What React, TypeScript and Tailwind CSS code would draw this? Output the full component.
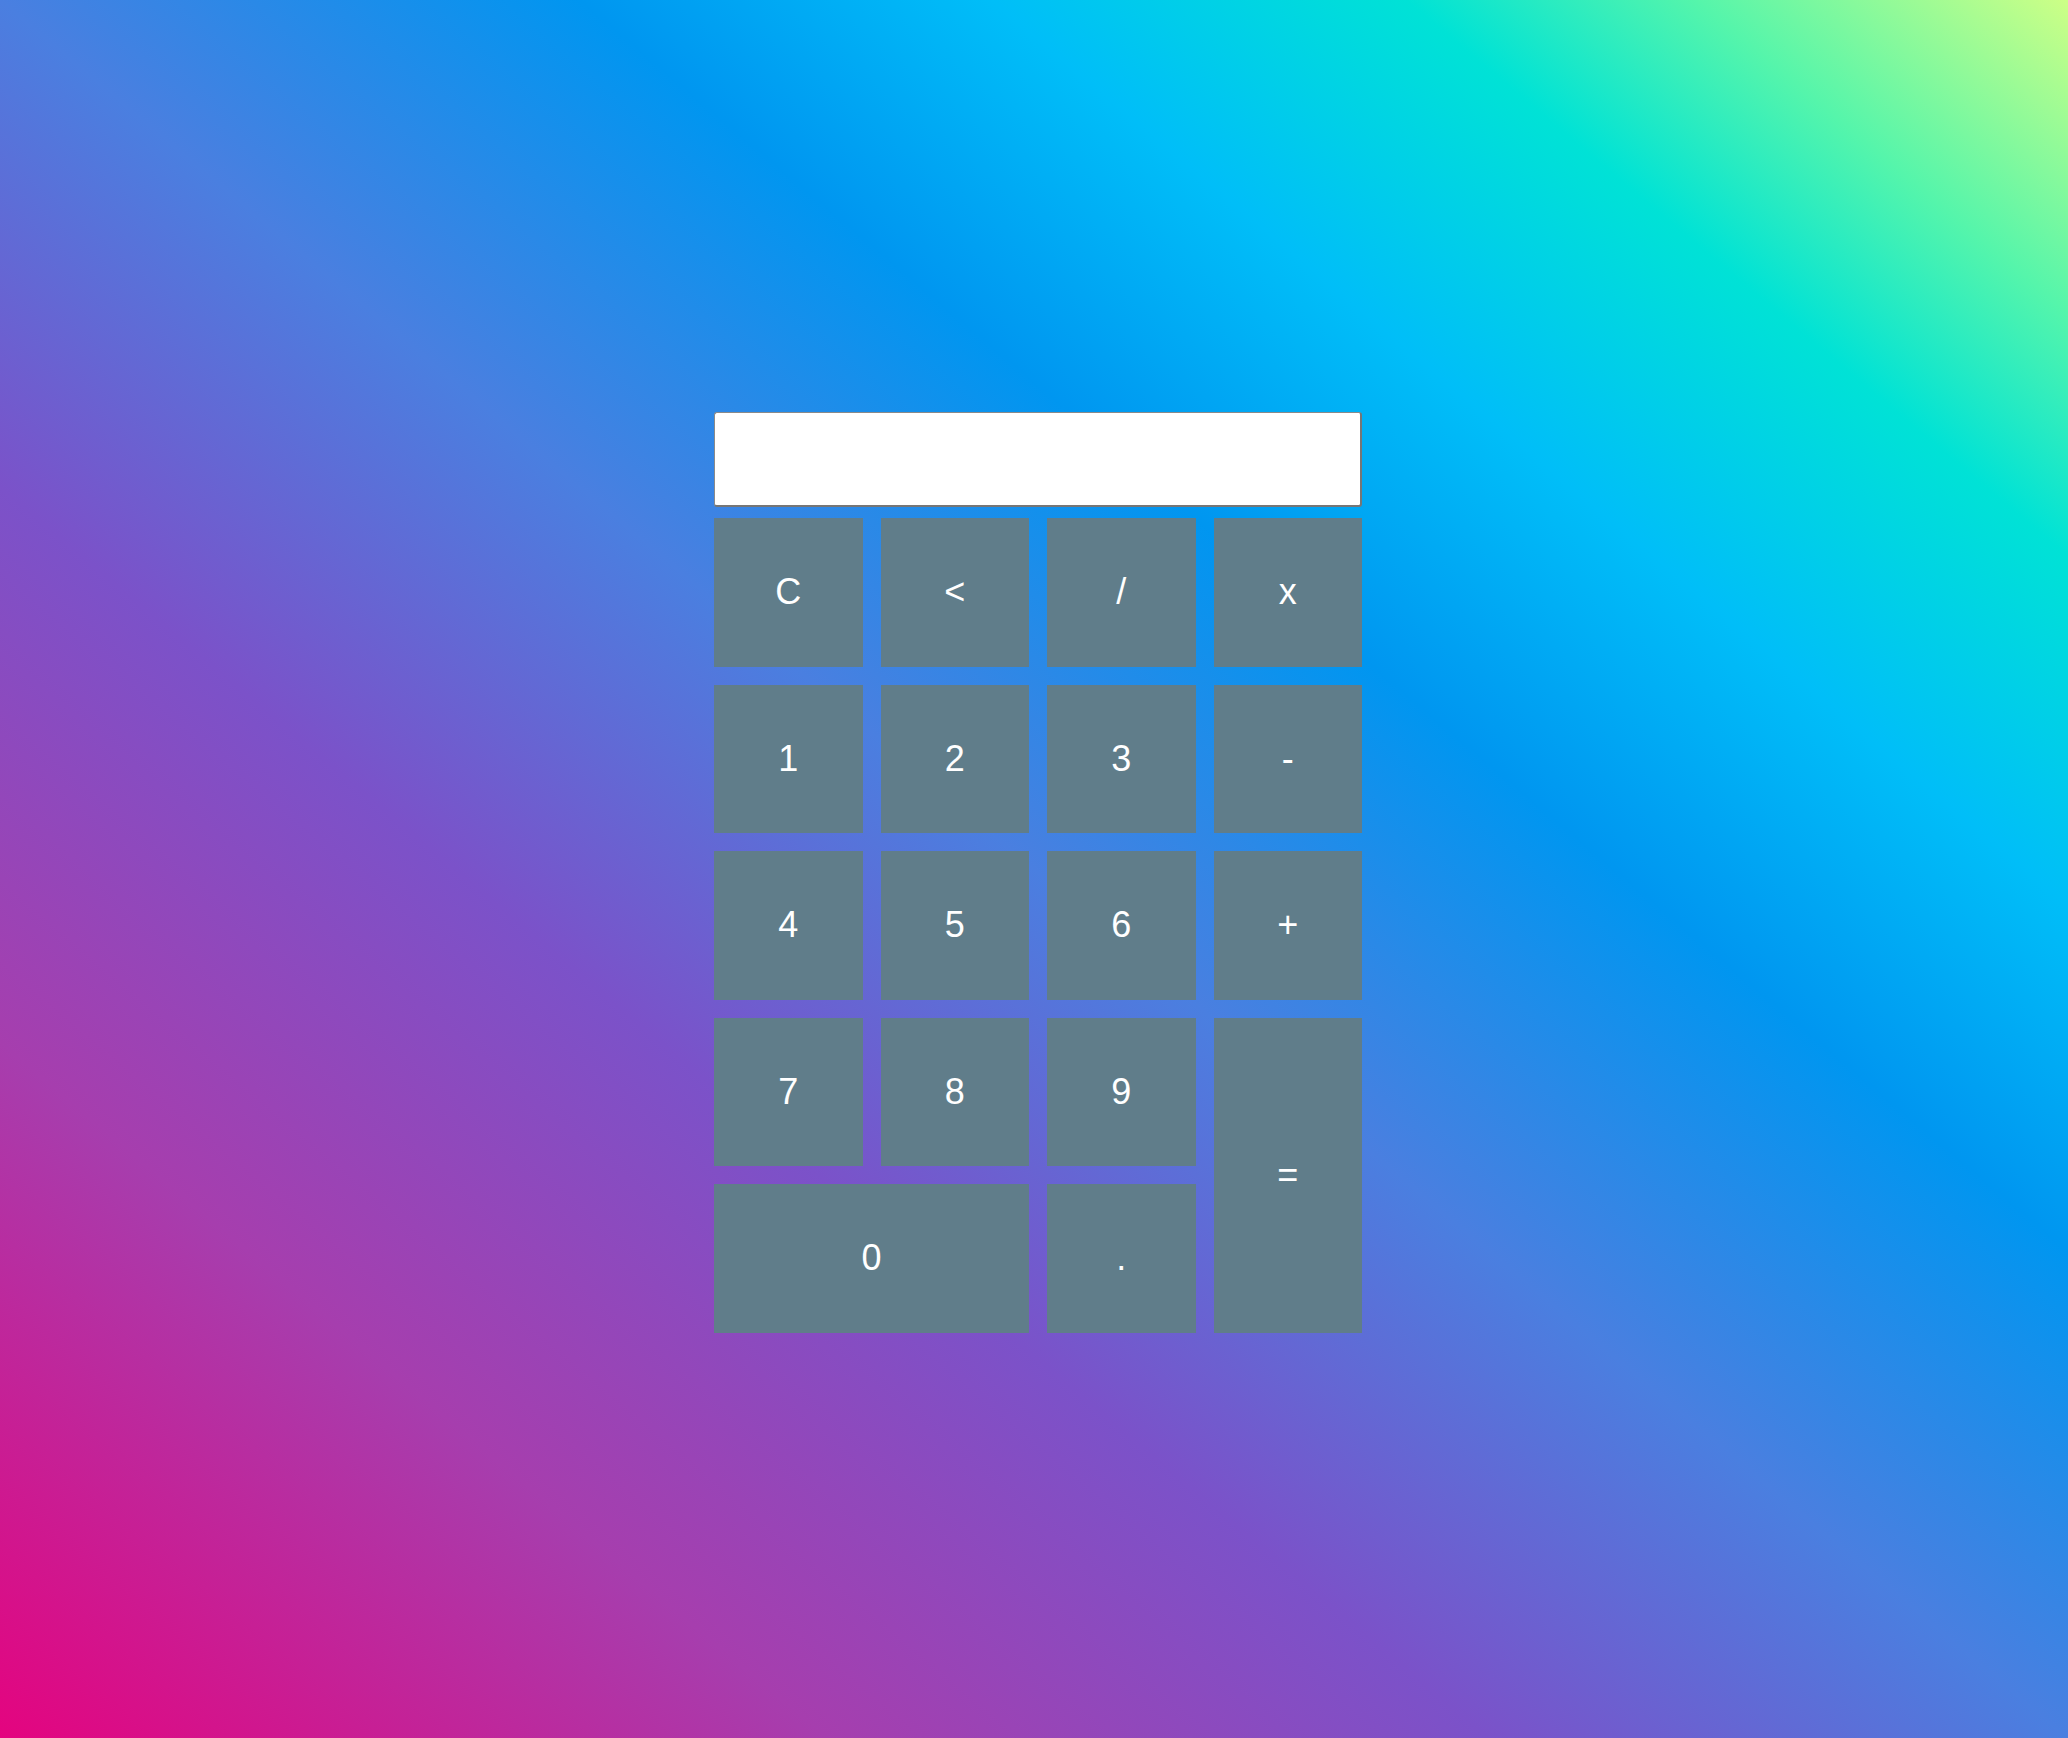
import { useState } from 'react';

const keys: { label: string; span?: string }[] = [
    { label: 'C' },
    { label: '<' },
    { label: '/' },
    { label: 'x' },
    { label: '1' },
    { label: '2' },
    { label: '3' },
    { label: '-' },
    { label: '4' },
    { label: '5' },
    { label: '6' },
    { label: '+' },
    { label: '7' },
    { label: '8' },
    { label: '9' },
    { label: '=', span: 'row-span-2' },
    { label: '0', span: 'col-span-2' },
    { label: '.' },
];

export default function App() {
    const [display, setDisplay] = useState('');

    const press = (k: string) => {
        if (k === 'C') return setDisplay('');
        if (k === '<') return setDisplay((d) => d.slice(0, -1));
        if (k === '=') {
            try {
                // eslint-disable-next-line no-new-func
                const v = Function(`return (${display.replace(/x/g, '*')})`)();
                setDisplay(String(v));
            } catch {
                setDisplay('Error');
            }
            return;
        }
        setDisplay((d) => d + k);
    };

    return (
        <div className="min-h-screen w-full flex justify-center pt-[412px] pl-[8px] bg-[linear-gradient(to_top_right,#e4047f_0%,#a63eae_20%,#7b52c9_36%,#4a7fe0_50%,#0096f0_64%,#00bef8_74%,#00e2d6_84%,#55f5ab_91%,#cdff86_100%)] font-['Liberation_Sans',Arial,sans-serif]">
            <div className="w-[648px] flex flex-col gap-[11px]">
                {/* display */}
                <input
                    type="text"
                    readOnly
                    value={display}
                    className="h-[95px] w-full bg-white rounded-[3px] border-t border-l border-r-2 border-b-2 border-t-[#8a8a8a] border-l-[#8a8a8a] border-r-[#767676] border-b-[#767676] px-3 text-right text-[36px] text-gray-900 outline-none"
                />

                {/* keypad */}
                <div className="grid grid-cols-4 auto-rows-[148.5px] gap-[18px]">
                    {keys.map((k) => (
                        <button
                            key={k.label}
                            onClick={() => press(k.label)}
                            className={`${k.span ?? ''} flex items-center justify-center bg-[#607d8a] text-white text-[36px] leading-none`}
                        >
                            {k.label}
                        </button>
                    ))}
                </div>
            </div>
        </div>
    );
}
